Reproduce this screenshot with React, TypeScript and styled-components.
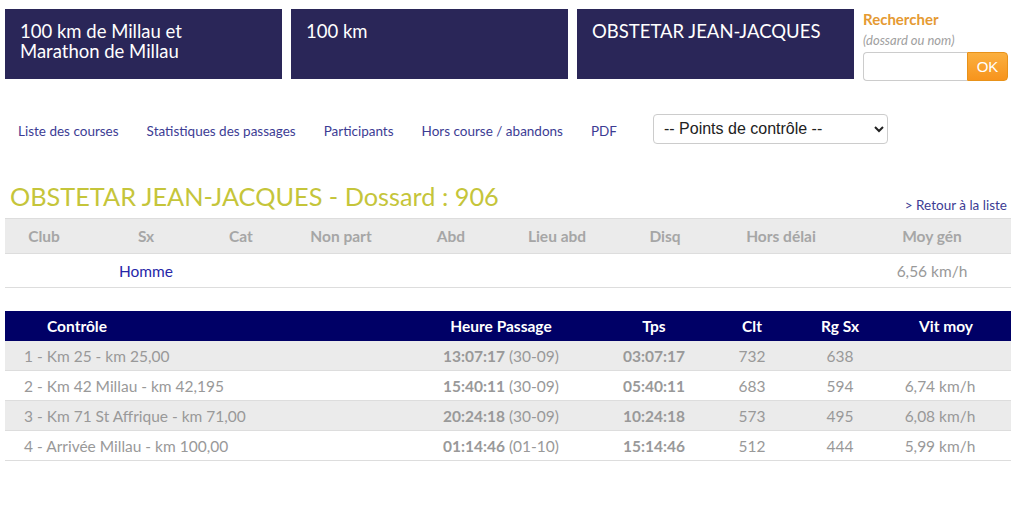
import React from "react";
import styled, { createGlobalStyle } from "styled-components";

const Global = createGlobalStyle`
  html, body { margin: 0; padding: 0; background: #fff; }
  body { font-family: "Lato", "DejaVu Sans", sans-serif; }
  * { box-sizing: border-box; }
`;

const Page = styled.div`
  width: 1024px;
  padding: 9px 13px 0 5px;
`;

const Header = styled.div`
  display: flex;
  gap: 9px;
  align-items: flex-start;
`;

const TitleBox = styled.div`
  width: 277px;
  height: 70px;
  background: #2a2658;
  color: #fff;
  font-size: 18.5px;
  line-height: 20px;
  padding: 12px 15px;
`;

const Search = styled.div`
  margin-left: 0;
  padding-top: 1px;
  display: flex;
  flex-direction: column;
`;

const SearchTitle = styled.div`
  color: #e59a32;
  font-weight: bold;
  font-size: 15px;
  line-height: 18px;
`;

const SearchHint = styled.div`
  color: #a0a0a0;
  font-style: italic;
  font-size: 13px;
  line-height: 15px;
  margin-top: 5px;
`;

const SearchForm = styled.div`
  display: flex;
  margin-top: 4px;
`;

const SearchInput = styled.input`
  width: 104px;
  height: 29px;
  border: 1px solid #ccc;
  border-right: none;
  border-radius: 4px 0 0 4px;
  outline: none;
`;

const OkButton = styled.button`
  width: 41px;
  height: 29px;
  border: 1px solid #e8921a;
  border-radius: 0 4px 4px 0;
  background: linear-gradient(#fbb040, #f7941d);
  color: #fff;
  font-family: "Liberation Sans", Arial, sans-serif;
  font-size: 15px;
  padding: 0;
`;

const Nav = styled.div`
  display: flex;
  align-items: center;
  margin-top: 35px;
  padding-left: 13px;
  height: 30px;
`;

const NavLink = styled.a`
  color: #3c3c94;
  font-size: 13.5px;
  text-decoration: none;
  margin-right: 28px;
`;

const Select = styled.select`
  width: 235px;
  height: 30px;
  margin: 0 0 5px 8px;
  border: 1px solid #ccc;
  border-radius: 4px;
  background: #fff;
  font-family: "Liberation Sans", Arial, sans-serif;
  font-size: 16px;
  color: #222;
  padding: 0 6px;
`;

const TitleRow = styled.div`
  display: flex;
  justify-content: space-between;
  align-items: flex-end;
  margin-top: 36px;
  padding: 0 0 8px 5px;
`;

const RunnerTitle = styled.h1`
  margin: 0;
  font-weight: normal;
  font-size: 25.3px;
  line-height: 28px;
  color: #c5c53a;
`;

const BackLink = styled.a`
  color: #3c3c94;
  font-size: 13.5px;
  text-decoration: none;
  margin-right: 4px;
  margin-bottom: -3px;
`;

const InfoGrid = styled.div`
  display: grid;
  grid-template-columns: 78px 126px 64px 136px 84px 128px 88px 144px 158px;
  width: 1006px;
  border-top: 1px solid #ddd;
`;

const InfoHead = styled.div`
  background: #ebebeb;
  color: #a6a6a6;
  font-size: 15.5px;
  font-weight: bold;
  height: 35px;
  display: flex;
  align-items: center;
  justify-content: center;
  border-bottom: 1px solid #ddd;
`;

const InfoCell = styled.div<{ $blue?: boolean }>`
  color: ${(p) => (p.$blue ? "#2626a8" : "#999")};
  font-size: 15.5px;
  height: 34px;
  display: flex;
  align-items: center;
  justify-content: center;
  border-bottom: 1px solid #ddd;
`;

const Passages = styled.div`
  display: grid;
  grid-template-columns: 394px 204px 102px 94px 82px 130px;
  width: 1006px;
  margin-top: 23px;
`;

const PHead = styled.div<{ $left?: boolean }>`
  background: #000066;
  color: #fff;
  font-weight: bold;
  font-size: 15.5px;
  height: 30px;
  display: flex;
  align-items: center;
  justify-content: ${(p) => (p.$left ? "flex-start" : "center")};
  padding-left: ${(p) => (p.$left ? "42px" : "0")};
`;

const PCell = styled.div<{ $alt: boolean; $left?: boolean; $bold?: boolean; $shift?: number }>`
  background: ${(p) => (p.$alt ? "#ebebeb" : "#fff")};
  color: #999;
  font-size: 15.5px;
  font-weight: ${(p) => (p.$bold ? "bold" : "normal")};
  height: 30px;
  display: flex;
  align-items: center;
  justify-content: ${(p) => (p.$left ? "flex-start" : "center")};
  padding-left: ${(p) => (p.$left ? "19px" : "0")};
  padding-right: ${(p) => (p.$shift ? `${p.$shift}px` : "0")};
  border-bottom: 1px solid #ddd;
`;

const Strong = styled.b`
  font-weight: bold;
  margin-right: 4px;
`;

const infoHeads = ["Club", "Sx", "Cat", "Non part", "Abd", "Lieu abd", "Disq", "Hors délai", "Moy gén"];
const infoVals = ["", "Homme", "", "", "", "", "", "", "6,56 km/h"];

const rows = [
  ["1 - Km 25 - km 25,00", "13:07:17", "(30-09)", "03:07:17", "732", "638", ""],
  ["2 - Km 42 Millau - km 42,195", "15:40:11", "(30-09)", "05:40:11", "683", "594", "6,74 km/h"],
  ["3 - Km 71 St Affrique - km 71,00", "20:24:18", "(30-09)", "10:24:18", "573", "495", "6,08 km/h"],
  ["4 - Arrivée Millau - km 100,00", "01:14:46", "(01-10)", "15:14:46", "512", "444", "5,99 km/h"],
];

export default function App() {
  return (
    <Page>
      <Global />
      <Header>
        <TitleBox>100 km de Millau et<br />Marathon de Millau</TitleBox>
        <TitleBox>100 km</TitleBox>
        <TitleBox>OBSTETAR JEAN-JACQUES</TitleBox>
        <Search>
          <SearchTitle>Rechercher</SearchTitle>
          <SearchHint>(dossard ou nom)</SearchHint>
          <SearchForm>
            <SearchInput />
            <OkButton>OK</OkButton>
          </SearchForm>
        </Search>
      </Header>
      <Nav>
        <NavLink href="#">Liste des courses</NavLink>
        <NavLink href="#">Statistiques des passages</NavLink>
        <NavLink href="#">Participants</NavLink>
        <NavLink href="#">Hors course / abandons</NavLink>
        <NavLink href="#">PDF</NavLink>
        <Select defaultValue="">
          <option value="">-- Points de contrôle --</option>
        </Select>
      </Nav>
      <TitleRow>
        <RunnerTitle>OBSTETAR JEAN-JACQUES - Dossard : 906</RunnerTitle>
        <BackLink href="#">&gt; Retour à la liste</BackLink>
      </TitleRow>
      <InfoGrid>
        {infoHeads.map((h) => (
          <InfoHead key={h}>{h}</InfoHead>
        ))}
        {infoVals.map((v, i) => (
          <InfoCell key={i} $blue={i === 1}>{v}</InfoCell>
        ))}
      </InfoGrid>
      <Passages>
        <PHead $left>Contrôle</PHead>
        <PHead>Heure Passage</PHead>
        <PHead>Tps</PHead>
        <PHead>Clt</PHead>
        <PHead>Rg Sx</PHead>
        <PHead>Vit moy</PHead>
        {rows.map((r, i) => {
          const alt = i % 2 === 0;
          return (
            <React.Fragment key={i}>
              <PCell $alt={alt} $left>{r[0]}</PCell>
              <PCell $alt={alt}><Strong>{r[1]}</Strong>{r[2]}</PCell>
              <PCell $alt={alt} $bold>{r[3]}</PCell>
              <PCell $alt={alt}>{r[4]}</PCell>
              <PCell $alt={alt}>{r[5]}</PCell>
              <PCell $alt={alt} $shift={12}>{r[6]}</PCell>
            </React.Fragment>
          );
        })}
      </Passages>
    </Page>
  );
}
